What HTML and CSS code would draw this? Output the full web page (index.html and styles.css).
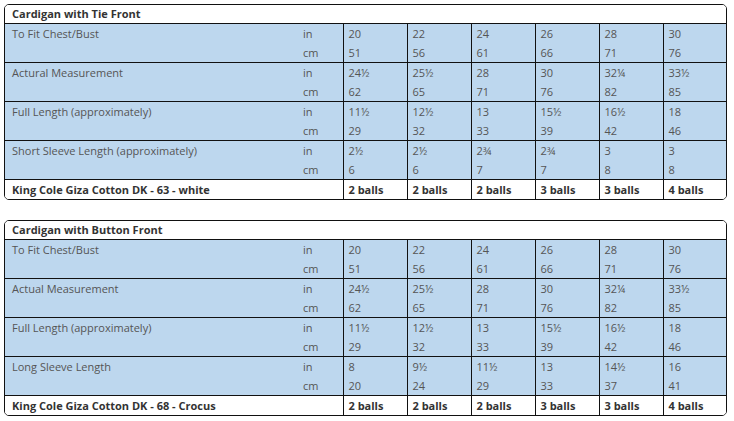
FILE: index.html
```html
<!DOCTYPE html>
<html>
<head>
<meta charset="utf-8">
<link rel="stylesheet" href="styles.css">
</head>
<body>
<div class="page">
  <div class="box">
    <table class="sizes">
      <colgroup>
        <col class="c-label"><col class="c-unit">
        <col class="c-val"><col class="c-val"><col class="c-val"><col class="c-val"><col class="c-val"><col class="c-last">
      </colgroup>
      <tr class="title"><th colspan="8">Cardigan with Tie Front</th></tr>
      <tr class="meas">
        <td class="label"><div>To Fit Chest/Bust</div></td>
        <td class="unit"><div>in</div><div>cm</div></td>
        <td><div>20</div><div>51</div></td>
        <td><div>22</div><div>56</div></td>
        <td><div>24</div><div>61</div></td>
        <td><div>26</div><div>66</div></td>
        <td><div>28</div><div>71</div></td>
        <td><div>30</div><div>76</div></td>
      </tr>
      <tr class="meas">
        <td class="label"><div>Actural Measurement</div></td>
        <td class="unit"><div>in</div><div>cm</div></td>
        <td><div>24½</div><div>62</div></td>
        <td><div>25½</div><div>65</div></td>
        <td><div>28</div><div>71</div></td>
        <td><div>30</div><div>76</div></td>
        <td><div>32¼</div><div>82</div></td>
        <td><div>33½</div><div>85</div></td>
      </tr>
      <tr class="meas">
        <td class="label"><div>Full Length (approximately)</div></td>
        <td class="unit"><div>in</div><div>cm</div></td>
        <td><div>11½</div><div>29</div></td>
        <td><div>12½</div><div>32</div></td>
        <td><div>13</div><div>33</div></td>
        <td><div>15½</div><div>39</div></td>
        <td><div>16½</div><div>42</div></td>
        <td><div>18</div><div>46</div></td>
      </tr>
      <tr class="meas">
        <td class="label"><div>Short Sleeve Length (approximately)</div></td>
        <td class="unit"><div>in</div><div>cm</div></td>
        <td><div>2½</div><div>6</div></td>
        <td><div>2½</div><div>6</div></td>
        <td><div>2¾</div><div>7</div></td>
        <td><div>2¾</div><div>7</div></td>
        <td><div>3</div><div>8</div></td>
        <td><div>3</div><div>8</div></td>
      </tr>
      <tr class="yarn">
        <td colspan="2">King Cole Giza Cotton DK - 63 - white</td>
        <td>2 balls</td><td>2 balls</td><td>2 balls</td><td>3 balls</td><td>3 balls</td><td>4 balls</td>
      </tr>
    </table>
  </div>

  <div class="box">
    <table class="sizes">
      <colgroup>
        <col class="c-label"><col class="c-unit">
        <col class="c-val"><col class="c-val"><col class="c-val"><col class="c-val"><col class="c-val"><col class="c-last">
      </colgroup>
      <tr class="title"><th colspan="8">Cardigan with Button Front</th></tr>
      <tr class="meas">
        <td class="label"><div>To Fit Chest/Bust</div></td>
        <td class="unit"><div>in</div><div>cm</div></td>
        <td><div>20</div><div>51</div></td>
        <td><div>22</div><div>56</div></td>
        <td><div>24</div><div>61</div></td>
        <td><div>26</div><div>66</div></td>
        <td><div>28</div><div>71</div></td>
        <td><div>30</div><div>76</div></td>
      </tr>
      <tr class="meas">
        <td class="label"><div>Actual Measurement</div></td>
        <td class="unit"><div>in</div><div>cm</div></td>
        <td><div>24½</div><div>62</div></td>
        <td><div>25½</div><div>65</div></td>
        <td><div>28</div><div>71</div></td>
        <td><div>30</div><div>76</div></td>
        <td><div>32¼</div><div>82</div></td>
        <td><div>33½</div><div>85</div></td>
      </tr>
      <tr class="meas">
        <td class="label"><div>Full Length (approximately)</div></td>
        <td class="unit"><div>in</div><div>cm</div></td>
        <td><div>11½</div><div>29</div></td>
        <td><div>12½</div><div>32</div></td>
        <td><div>13</div><div>33</div></td>
        <td><div>15½</div><div>39</div></td>
        <td><div>16½</div><div>42</div></td>
        <td><div>18</div><div>46</div></td>
      </tr>
      <tr class="meas">
        <td class="label"><div>Long Sleeve Length</div></td>
        <td class="unit"><div>in</div><div>cm</div></td>
        <td><div>8</div><div>20</div></td>
        <td><div>9½</div><div>24</div></td>
        <td><div>11½</div><div>29</div></td>
        <td><div>13</div><div>33</div></td>
        <td><div>14½</div><div>37</div></td>
        <td><div>16</div><div>41</div></td>
      </tr>
      <tr class="yarn">
        <td colspan="2">King Cole Giza Cotton DK - 68 - Crocus</td>
        <td>2 balls</td><td>2 balls</td><td>2 balls</td><td>3 balls</td><td>3 balls</td><td>4 balls</td>
      </tr>
    </table>
  </div>
</div>
</body>
</html>
```

FILE: styles.css
```css
html, body {
  margin: 0;
  padding: 0;
  background: #ffffff;
}

.page {
  padding: 4px 0 0 4px;
  display: flex;
  flex-direction: column;
  gap: 20px;
  font-family: "Open Sans", "DejaVu Sans", sans-serif;
  font-size: 11px;
  color: #555555;
}

.box {
  width: 721px;
  border: 1px solid #111111;
  border-radius: 5px;
  overflow: hidden;
}

.sizes {
  width: 721px;
  border-collapse: collapse;
  table-layout: fixed;
}

.c-label { width: 298px; }
.c-unit { width: 40px; }
.c-val { width: 64px; }
.c-last { width: 63px; }

.sizes th,
.sizes td {
  padding: 0;
  text-align: left;
  vertical-align: top;
}

.title th {
  height: 18px;
  line-height: 18px;
  padding-left: 7px;
  font-weight: 700;
  color: #333333;
  border-bottom: 1px solid #111111;
  background: #ffffff;
}

.meas td {
  background: #bdd7ee;
  border-bottom: 1px solid #111111;
  border-left: 1px solid #111111;
}

.meas td div {
  height: 19px;
  line-height: 19px;
  padding-left: 5px;
}

.meas td.label {
  border-left: none;
}

.meas td.label div {
  padding-left: 7px;
}

.meas td.unit {
  border-left: none;
}

.meas td.unit div {
  padding-left: 0;
}

.yarn td {
  height: 19px;
  line-height: 19px;
  padding-left: 5px;
  font-weight: 700;
  color: #333333;
  border-left: 1px solid #111111;
  background: #ffffff;
}

.yarn td:first-child {
  border-left: none;
  padding-left: 7px;
}
```
